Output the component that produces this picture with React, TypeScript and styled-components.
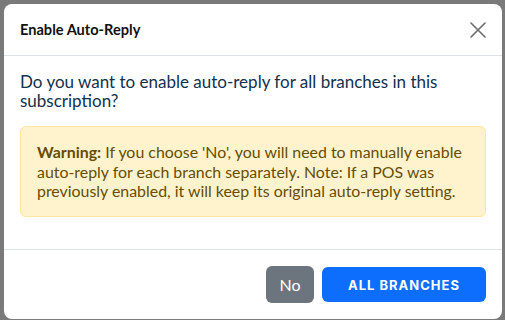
import styled, { createGlobalStyle } from "styled-components";

const GlobalStyle = createGlobalStyle`
  html, body {
    margin: 0;
    padding: 0;
    background: #7a7a7a;
    font-family: Lato, "Open Sans", sans-serif;
  }
`;

export default function App() {
  return (
    <>
      <GlobalStyle />
      <Backdrop>
        <Modal role="dialog" aria-labelledby="auto-reply-title">
          <Header>
            <Title id="auto-reply-title">Enable Auto-Reply</Title>
            <CloseButton aria-label="Close">
              <svg width="16" height="16" viewBox="0 0 16 16">
                <path d="M1 1L15 15M15 1L1 15" stroke="#6c6c6c" strokeWidth="1.6" strokeLinecap="round" />
              </svg>
            </CloseButton>
          </Header>
          <Body>
            <Question>
              Do you want to enable auto-reply for all branches in this subscription?
            </Question>
            <WarningBox>
              <strong>Warning:</strong> If you choose 'No', you will need to manually enable
              auto-reply for each branch separately. Note: If a POS was previously enabled, it
              will keep its original auto-reply setting.
            </WarningBox>
          </Body>
          <Footer>
            <Button $variant="secondary">No</Button>
            <Button $variant="primary">All branches</Button>
          </Footer>
        </Modal>
      </Backdrop>
    </>
  );
}

const Backdrop = styled.div`
  height: 320px;
  padding: 4px 3px 1px 4px;
  box-sizing: border-box;
`;

const Modal = styled.div`
  height: 100%;
  background: #fff;
  border-radius: 8px;
  display: flex;
  flex-direction: column;
  overflow: hidden;
`;

const Header = styled.div`
  height: 51px;
  padding: 0 16px 0 16px;
  display: flex;
  align-items: center;
  justify-content: space-between;
  border-bottom: 1px solid #dee2e6;
`;

const Title = styled.h5`
  margin: 0;
  font-size: 14.6px;
  font-weight: 700;
  color: #111;
`;

const CloseButton = styled.button`
  border: 0;
  background: none;
  padding: 0;
  width: 16px;
  height: 16px;
  display: flex;
  cursor: pointer;
`;

const Body = styled.div`
  flex: 1;
  padding: 16px;
`;

const Question = styled.p`
  margin: 0 0 16px;
  font-size: 17px;
  line-height: 19px;
  color: #12314d;
`;

const WarningBox = styled.div`
  background: #fff3cd;
  border: 1px solid #ffe69c;
  border-radius: 6px;
  padding: 15px 16px;
  font-size: 15.9px;
  line-height: 19.5px;
  color: #664d03;

  strong {
    font-weight: 700;
  }
`;

const Footer = styled.div`
  border-top: 1px solid #dee2e6;
  padding: 16px;
  display: flex;
  justify-content: flex-end;
  align-items: center;
  gap: 8px;
`;

const Button = styled.button<{ $variant: "primary" | "secondary" }>`
  border: 0;
  border-radius: 6px;
  color: #fff;
  cursor: pointer;
  font-family: ${(p) => (p.$variant === "primary" ? "Inter, sans-serif" : "Lato, sans-serif")};
  background: ${(p) => (p.$variant === "primary" ? "#0d6efd" : "#6c757d")};
  height: ${(p) => (p.$variant === "primary" ? "35px" : "37px")};
  width: ${(p) => (p.$variant === "primary" ? "164px" : "48px")};
  font-size: ${(p) => (p.$variant === "primary" ? "13px" : "16px")};
  font-weight: ${(p) => (p.$variant === "primary" ? 700 : 400)};
  letter-spacing: ${(p) => (p.$variant === "primary" ? "1px" : "0")};
  text-transform: ${(p) => (p.$variant === "primary" ? "uppercase" : "none")};
`;
